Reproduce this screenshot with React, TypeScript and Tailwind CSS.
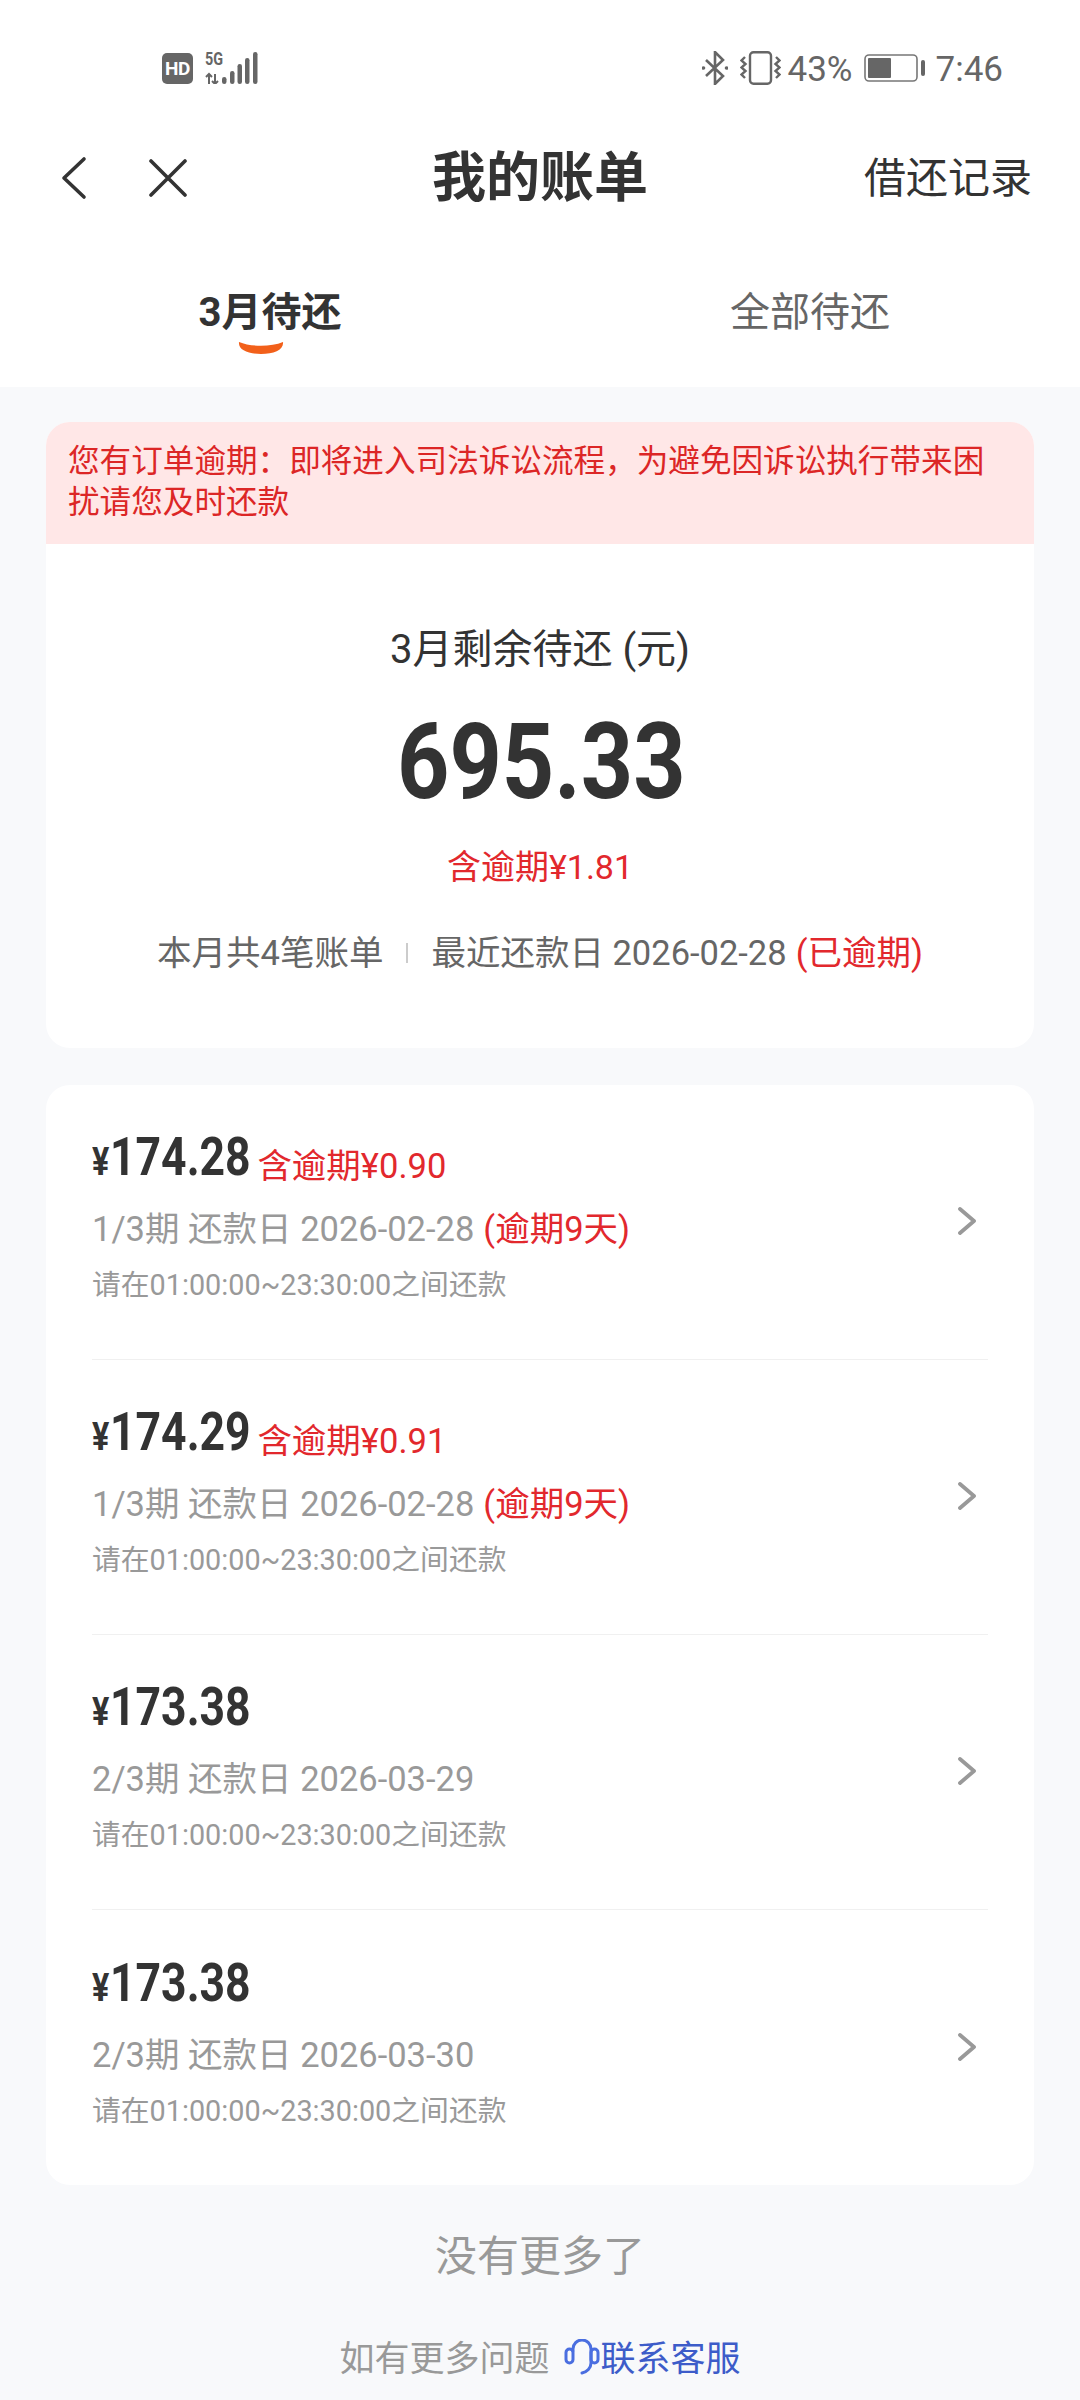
const fontBase = "[font-family:Roboto,'Noto_Sans_CJK_SC',sans-serif]";

interface BillRow {
  amount: string;
  overdue?: string;
  period: string;
  date: string;
  late?: string;
}

const bills: BillRow[] = [
  { amount: "174.28", overdue: "含逾期¥0.90", period: "1/3期", date: "2026-02-28", late: "(逾期9天)" },
  { amount: "174.29", overdue: "含逾期¥0.91", period: "1/3期", date: "2026-02-28", late: "(逾期9天)" },
  { amount: "173.38", period: "2/3期", date: "2026-03-29" },
  { amount: "173.38", period: "2/3期", date: "2026-03-30" },
];

function StatusBar() {
  return (
    <div className="flex h-[136px] items-center justify-between pl-[162px] pr-[77px]">
      <div className="flex items-center gap-[12px]">
        <div className="flex h-[31px] w-[31px] items-center justify-center rounded-[5px] bg-[#666] text-[19px] leading-none font-bold tracking-[-0.5px] text-white">
          HD
        </div>
        <div className="relative h-[32px] w-[54px]">
          <span className="absolute left-0 top-[-3px] inline-block origin-left scale-x-[.8] text-[18px] leading-[20px] font-bold text-[#666]">
            5G
          </span>
          <svg width="54" height="32" viewBox="0 0 54 32" className="absolute left-0 top-0">
            <path d="M4 32V22M1 25l3-3 3 3M10 22v10M7 29l3 3 3-3" stroke="#666" strokeWidth="2" fill="none" />
            <rect x="17" y="25" width="4.5" height="7" rx="2.2" fill="#666" />
            <rect x="25" y="19" width="4.5" height="13" rx="2.2" fill="#666" />
            <rect x="32.5" y="12" width="4.5" height="20" rx="2.2" fill="#666" />
            <rect x="40" y="6" width="4.5" height="26" rx="2.2" fill="#666" />
            <rect x="48" y="0" width="4.5" height="32" rx="2.2" fill="#666" />
          </svg>
        </div>
      </div>
      <div className="flex items-center text-[35px] leading-none text-[#666]">
        <svg width="26" height="34" viewBox="0 0 26 34" fill="none" stroke="#666" strokeWidth="2.6">
          <path d="M4 9l17 16-8 8V1l8 8L4 25" />
          <circle cx="1.5" cy="17" r="1.8" fill="#666" stroke="none" />
          <circle cx="24.5" cy="17" r="1.8" fill="#666" stroke="none" />
        </svg>
        <svg width="41" height="34" viewBox="0 0 41 34" fill="none" stroke="#666" className="ml-[12px]">
          <rect x="10" y="1.2" width="21" height="31.6" rx="3.5" strokeWidth="2.4" />
          <path d="M5 6L1.5 9.5l4 3.5-4 3.5 4 3.5-4 3.5L5 27" strokeWidth="2.4" />
          <path d="M36 6l3.5 3.5-4 3.5 4 3.5-4 3.5 4 3.5L36 27" strokeWidth="2.4" />
        </svg>
        <span className="ml-[7px] pt-[2px]">43%</span>
        <svg width="62" height="28" viewBox="0 0 62 28" fill="none" className="ml-[11px]">
          <rect x="1" y="1" width="52" height="26" rx="4" stroke="#777" strokeWidth="1.6" />
          <rect x="4" y="4" width="23" height="20" rx="1" fill="#666" />
          <rect x="57" y="6" width="4" height="16" rx="2" fill="#666" />
        </svg>
        <span className="ml-[10px] pt-[2px]">7:46</span>
      </div>
    </div>
  );
}

function Header() {
  return (
    <div className="relative mt-[5px] flex h-[74px] items-center justify-between pl-[60px] pr-[48px]">
      <div className="flex items-center gap-[62px]">
        <svg width="27" height="44" viewBox="0 0 27 44" fill="none" stroke="#333" strokeWidth="3.6" strokeLinecap="round" strokeLinejoin="round">
          <path d="M24 3L4 22l20 19" />
        </svg>
        <svg width="38" height="38" viewBox="0 0 38 38" fill="none" stroke="#333" strokeWidth="3.6" strokeLinecap="round">
          <path d="M2 2l34 34M36 2L2 36" />
        </svg>
      </div>
      <div className="pointer-events-none absolute inset-x-0 text-center text-[54px] font-bold text-[#333]">我的账单</div>
      <div className="text-[42px] text-[#333]">借还记录</div>
    </div>
  );
}

function Tabs() {
  return (
    <div className="grid h-[172px] grid-cols-2 pt-[70px]">
      <div className="flex flex-col items-center">
        <span className="text-[40px] leading-[56px] font-bold text-[#333]">3月待还</span>
        <svg width="46" height="13" viewBox="0 0 46 13" className="mt-[0px] ml-[-18px]">
          <path d="M1 1c12 5 32 5 44 0 1 8-9 12-22 12S0 9 1 1z" fill="#f2601a" />
        </svg>
      </div>
      <div className="flex flex-col items-center">
        <span className="text-[40px] leading-[56px] text-[#666]">全部待还</span>
      </div>
    </div>
  );
}

function SummaryCard() {
  return (
    <div className="overflow-hidden rounded-[24px] bg-white">
      <div className="h-[122px] bg-[#ffe7e7] px-[22px] pt-[19px] text-[31.6px] leading-[41px] text-[#dc2626]">
        您有订单逾期：即将进入司法诉讼流程，为避免因诉讼执行带来困扰请您及时还款
      </div>
      <div className="flex h-[504px] flex-col items-center pt-[81px]">
        <div className="text-[40px] leading-[50px] text-[#333]">3月剩余待还 (元)</div>
        <div className="mt-[33px] h-[110px] w-[286px]">
          <span className="inline-block origin-left scale-x-[.87] text-[105px] leading-[110px] font-bold text-[#333]">
            695.33
          </span>
        </div>
        <div className="mt-[25px] text-[34px] leading-[48px] text-[#e2282d]">含逾期¥1.81</div>
        <div className="mt-[38px] flex items-center text-[34.5px] leading-[48px] text-[#666]">
          <span>本月共4笔账单</span>
          <span className="mx-[23px] h-[20px] w-[2px] bg-[#ccc]" />
          <span>最近还款日 2026-02-28</span>
          <span className="ml-[9px] text-[#e2282d]">(已逾期)</span>
        </div>
      </div>
    </div>
  );
}

function BillItem({ bill, last }: { bill: BillRow; last: boolean }) {
  return (
    <div className={`flex h-[275px] items-center justify-between pr-[12px] ${last ? "" : "border-b border-[#f0f0f0]"}`}>
      <div className="pb-[8px]">
        <div className="flex h-[60px] items-baseline">
          <span className="inline-block origin-left scale-x-[.85] text-[38px] font-bold text-[#333]">¥</span>
          <span className="ml-[-2px] w-[142px]">
            <span className="inline-block origin-left scale-x-[.84] text-[53px] leading-[60px] font-bold text-[#333]">
              {bill.amount}
            </span>
          </span>
          {bill.overdue && <span className="ml-[5px] translate-y-[3px] text-[34.5px] text-[#e2282d]">{bill.overdue}</span>}
        </div>
        <div className="mt-[10px] text-[34.5px] leading-[64px] text-[#999]">
          {bill.period} 还款日 {bill.date}
          {bill.late && <span className="ml-[9px] text-[#e2282d]">{bill.late}</span>}
        </div>
        <div className="mt-0 text-[28.8px] leading-[48px] text-[#999]">请在01:00:00~23:30:00之间还款</div>
      </div>
      <svg width="18" height="28" viewBox="0 0 18 28" fill="none" stroke="#999" strokeWidth="3.8" strokeLinecap="round" strokeLinejoin="round" className="mb-[2px]">
        <path d="M2 2l14 12L2 26" />
      </svg>
    </div>
  );
}

export default function App() {
  return (
    <div className={`flex h-[2400px] w-[1080px] flex-col overflow-hidden bg-[#f8f9fb] ${fontBase}`}>
      <div className="bg-white">
        <StatusBar />
        <Header />
        <Tabs />
      </div>
      <div className="flex flex-col gap-[37px] px-[46px] pt-[35px]">
        <SummaryCard />
        <div className="rounded-[24px] bg-white px-[46px]">
          {bills.map((bill, i) => (
            <BillItem key={i} bill={bill} last={i === bills.length - 1} />
          ))}
        </div>
      </div>
      <div className="mt-[44px] text-center text-[42px] leading-[56px] text-[#999]">没有更多了</div>
      <div className="mt-[51px] flex items-center justify-center text-[35px] leading-[48px] text-[#999]">
        <span>如有更多问题</span>
        <svg width="36" height="36" viewBox="0 0 36 36" fill="none" stroke="#4a6ee0" strokeWidth="3" strokeLinecap="round" className="mb-[6px] ml-[14px]">
          <path d="M9 12v-2a9 9 0 0 1 18 0v14c0 5-4 9-9 10" />
          <rect x="2" y="10" width="7" height="14" rx="3.5" />
          <rect x="27" y="10" width="7" height="14" rx="3.5" />
        </svg>
        <span className="ml-[1px] text-[#3d5cc9]">联系客服</span>
      </div>
    </div>
  );
}
